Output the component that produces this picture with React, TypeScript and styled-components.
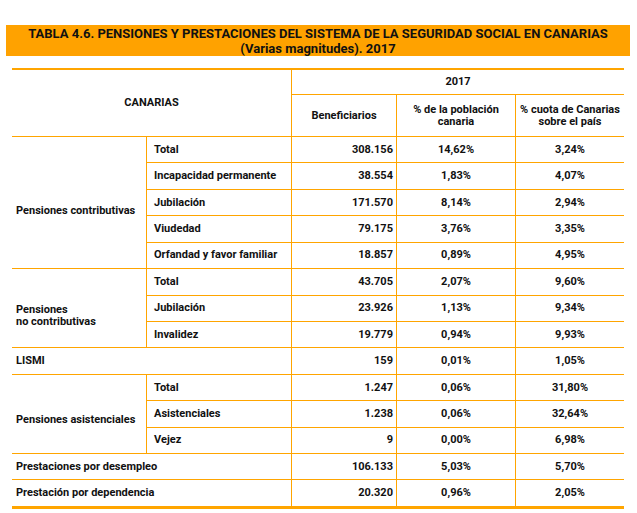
import React from 'react';
import styled, { createGlobalStyle } from 'styled-components';

const ORANGE = '#FFA500';

const GlobalStyle = createGlobalStyle`
  html, body { margin: 0; padding: 0; background: #ffffff; }
  body {
    font-family: Roboto, "Liberation Sans", Arial, sans-serif;
    color: #000000;
  }
`;

const Page = styled.div`
  padding-top: 25px;
`;

const Banner = styled.h1`
  margin: 0 0 0 6px;
  width: 624px;
  height: 31px;
  box-sizing: border-box;
  padding-top: 1px;
  background: #ffa200;
  color: #111;
  font-size: 13px;
  font-weight: 700;
  line-height: 15px;
  text-align: center;
`;

const Table = styled.div`
  margin: 12px 0 0 12px;
  width: 612px;
  display: grid;
  grid-template-columns: 134px 145px 105px 119px 109px;
  grid-template-rows: 25px 42px repeat(14, 26.43px);
  border-top: 2px solid ${ORANGE};
  border-bottom: 2px solid ${ORANGE};
  font-size: 11px;
  font-weight: 700;
  line-height: 12px;
  color: #111;
`;

type Align = 'left' | 'center' | 'right';

const Cell = styled.div<{
  $left?: boolean;
  $align?: Align;
  $cols?: number;
  $rows?: number;
  $pt?: number;
}>`
  grid-column: span ${(p) => p.$cols ?? 1};
  grid-row: span ${(p) => p.$rows ?? 1};
  display: flex;
  align-items: center;
  justify-content: ${(p) =>
    p.$align === 'right' ? 'flex-end' : p.$align === 'center' ? 'center' : 'flex-start'};
  text-align: ${(p) => p.$align ?? 'left'};
  box-sizing: border-box;
  border-bottom: 1px solid ${ORANGE};
  border-left: ${(p) => (p.$left ? `1px solid ${ORANGE}` : 'none')};
  padding-top: ${(p) => p.$pt ?? 0}px;
  min-width: 0;
`;

const HeadCell = styled(Cell)`
  padding-left: 2px;
  padding-right: 2px;
`;

const GroupLabel = styled(Cell)`
  padding-left: 4px;
`;

const SubLabel = styled(Cell)`
  padding-left: 7px;
`;

const NumCell = styled(Cell)`
  padding-right: 3px;
`;

type Row = [string, string, string, string];

interface Group {
  label: string[];
  pt: number;
  rows: Row[];
}

interface Single {
  label: string;
  values: [string, string, string];
}

type Block = { kind: 'group'; data: Group } | { kind: 'single'; data: Single };

const blocks: Block[] = [
  {
    kind: 'group',
    data: {
      label: ['Pensiones contributivas'],
      pt: 16,
      rows: [
        ['Total', '308.156', '14,62%', '3,24%'],
        ['Incapacidad permanente', '38.554', '1,83%', '4,07%'],
        ['Jubilación', '171.570', '8,14%', '2,94%'],
        ['Viudedad', '79.175', '3,76%', '3,35%'],
        ['Orfandad y favor familiar', '18.857', '0,89%', '4,95%'],
      ],
    },
  },
  {
    kind: 'group',
    data: {
      label: ['Pensiones', 'no contributivas'],
      pt: 15,
      rows: [
        ['Total', '43.705', '2,07%', '9,60%'],
        ['Jubilación', '23.926', '1,13%', '9,34%'],
        ['Invalidez', '19.779', '0,94%', '9,93%'],
      ],
    },
  },
  { kind: 'single', data: { label: 'LISMI', values: ['159', '0,01%', '1,05%'] } },
  {
    kind: 'group',
    data: {
      label: ['Pensiones asistenciales'],
      pt: 13,
      rows: [
        ['Total', '1.247', '0,06%', '31,80%'],
        ['Asistenciales', '1.238', '0,06%', '32,64%'],
        ['Vejez', '9', '0,00%', '6,98%'],
      ],
    },
  },
  {
    kind: 'single',
    data: { label: 'Prestaciones por desempleo', values: ['106.133', '5,03%', '5,70%'] },
  },
  {
    kind: 'single',
    data: { label: 'Prestación por dependencia', values: ['20.320', '0,96%', '2,05%'] },
  },
];

const Values: React.FC<{ values: string[] }> = ({ values }) => (
  <>
    <NumCell $left $align="right">{values[0]}</NumCell>
    <Cell $left $align="center">{values[1]}</Cell>
    <Cell $left $align="center">{values[2]}</Cell>
  </>
);

export default function App() {
  return (
    <Page>
      <GlobalStyle />
      <Banner>
        TABLA 4.6. PENSIONES Y PRESTACIONES DEL SISTEMA DE LA SEGURIDAD SOCIAL EN CANARIAS
        <br />
        (Varias magnitudes). 2017
      </Banner>
      <Table>
        <HeadCell $cols={2} $rows={2} $align="center">CANARIAS</HeadCell>
        <HeadCell $cols={3} $left $align="center">2017</HeadCell>
        <HeadCell $left $align="center">Beneficiarios</HeadCell>
        <HeadCell $left $align="center">
          % de la población
          <br />
          canaria
        </HeadCell>
        <HeadCell $left $align="center">
          % cuota de Canarias
          <br />
          sobre el país
        </HeadCell>
        {blocks.map((b, i) =>
          b.kind === 'group' ? (
            <React.Fragment key={i}>
              <GroupLabel $rows={b.data.rows.length} $pt={b.data.pt}>
                <span>
                  {b.data.label.map((l, j) => (
                    <React.Fragment key={j}>
                      {j > 0 && <br />}
                      {l}
                    </React.Fragment>
                  ))}
                </span>
              </GroupLabel>
              {b.data.rows.map((r, j) => (
                <React.Fragment key={j}>
                  <SubLabel $left>{r[0]}</SubLabel>
                  <Values values={r.slice(1)} />
                </React.Fragment>
              ))}
            </React.Fragment>
          ) : (
            <React.Fragment key={i}>
              <GroupLabel $cols={2}>{b.data.label}</GroupLabel>
              <Values values={b.data.values} />
            </React.Fragment>
          )
        )}
      </Table>
    </Page>
  );
}
